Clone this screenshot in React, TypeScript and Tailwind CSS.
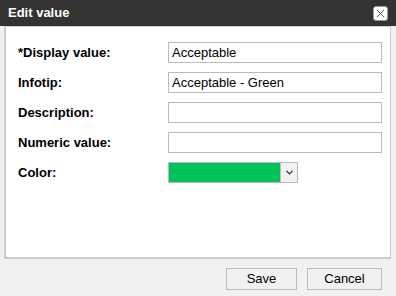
import { Fragment } from "react"
import { ChevronDown, X } from "lucide-react"

const fields = [
  { label: "*Display value:", value: "Acceptable" },
  { label: "Infotip:", value: "Acceptable - Green" },
  { label: "Description:", value: "" },
  { label: "Numeric value:", value: "" },
]

export default function App() {
  return (
    <div className="w-[396px] h-[296px] bg-[#f1f1f1] flex flex-col font-['Liberation_Sans',Arial,sans-serif] text-[13px] text-black">
      <div className="h-[26px] bg-[#333333] flex items-center justify-between pl-[8px] pr-[8px]">
        <span className="text-white font-bold text-[13px] leading-none -mt-[2px]">Edit value</span>
        <button className="w-[15px] h-[15px] bg-white rounded-[3px] border border-[#999] flex items-center justify-center">
          <X className="w-[13px] h-[13px] text-[#333]" strokeWidth={1.5} />
        </button>
      </div>

      <div className="px-[4px] pr-[5px]">
        <div className="h-[233px] bg-white border border-[#cccccc] border-l-2 border-b-2 pt-[15px] pl-[12px]">
          <div className="grid grid-cols-[150px_214px] gap-y-[9px]">
            {fields.map((f) => (
              <Fragment key={f.label}>
                <label className="font-bold text-[13px] h-[21px] flex items-center">{f.label}</label>
                <input
                  readOnly
                  value={f.value}
                  className="h-[21px] w-[214px] border border-[#bbbbbb] px-[3px] text-[13px] outline-none"
                />
              </Fragment>
            ))}
            <label className="font-bold text-[13px] h-[21px] flex items-center">Color:</label>
            <div className="h-[21px] w-[130px] flex border border-[#bbbbbb]">
              <div className="flex-1 bg-[#00c15a]" />
              <div className="w-[17px] bg-[#f1f1f1] border-l border-[#bbbbbb] flex items-center justify-center">
                <ChevronDown className="w-[11px] h-[11px] text-[#333]" strokeWidth={3} />
              </div>
            </div>
          </div>
        </div>
      </div>

      <div className="flex justify-end gap-[10px] pr-[14px] mt-[9px]">
        <button className="w-[71px] h-[22px] bg-[#f1f1f1] border border-[#bbbbbb] text-[13px]">Save</button>
        <button className="w-[75px] h-[22px] bg-[#f1f1f1] border border-[#bbbbbb] text-[13px]">Cancel</button>
      </div>
    </div>
  )
}
